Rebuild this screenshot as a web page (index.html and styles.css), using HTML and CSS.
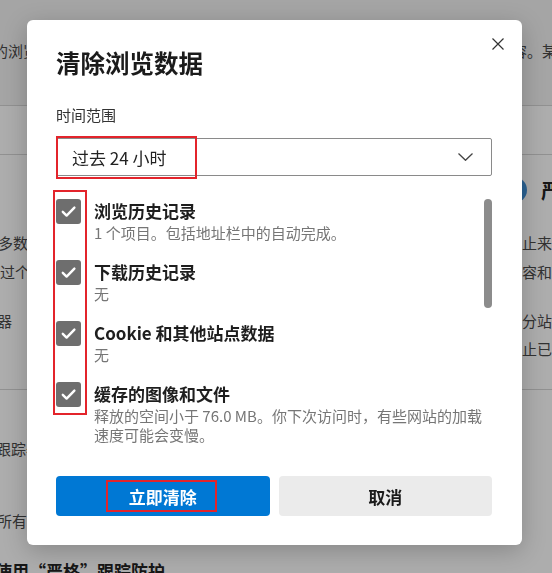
FILE: index.html
```html
<!DOCTYPE html>
<html lang="zh-CN">
<head>
    <meta charset="UTF-8">
    <meta name="viewport" content="width=device-width, initial-scale=1.0">
    <title>清除浏览数据</title>
    <link rel="stylesheet" href="styles.css">
</head>
<body>

    <!-- Settings page behind the dialog -->
    <div class="page">
        <div class="bg-row bg-top">
            <span class="bg-left indent-7">的浏览数据</span>
            <span></span>
            <span class="bg-right indent-10">内容。某些</span>
        </div>
        <div class="bg-band"></div>
        <div class="bg-row bg-head">
            <span></span>
            <span></span>
            <span class="bg-right head-right"><i class="dot"></i><b>严格</b></span>
        </div>
        <div class="bg-group group-a">
            <div class="bg-row">
                <span class="bg-left indent-2">多数跟踪器</span><span></span><span class="bg-right">阻止来自</span>
            </div>
            <div class="bg-row">
                <span class="bg-left">过个性化</span><span></span><span class="bg-right">内容和</span>
            </div>
        </div>
        <div class="bg-group group-b">
            <div class="bg-row">
                <span class="bg-left indent-3">器</span><span></span><span class="bg-right">部分站</span>
            </div>
            <div class="bg-row">
                <span class="bg-left"></span><span></span><span class="bg-right">阻止已知</span>
            </div>
        </div>
        <div class="bg-divider"></div>
        <div class="bg-row row-track">
            <span class="bg-left indent-4">跟踪器</span><span></span><span></span>
        </div>
        <div class="bg-row row-all">
            <span class="bg-left indent-3">所有站点</span><span></span><span></span>
        </div>
        <div class="row-strict">使用“严格”跟踪防护</div>
    </div>

    <div class="overlay"></div>

    <!-- Clear browsing data dialog -->
    <div class="dialog">
        <button class="close" aria-label="关闭">
            <svg width="12" height="12" viewBox="0 0 12 12">
                <path d="M0.5 0.5 L11.5 11.5 M11.5 0.5 L0.5 11.5" stroke="#333" stroke-width="1.2" fill="none"/>
            </svg>
        </button>

        <h1 class="title">清除浏览数据</h1>

        <div class="field-label">时间范围</div>
        <div class="select">
            <span>过去 24 小时</span>
            <svg width="15" height="8" viewBox="0 0 15 8">
                <polyline points="0.5,0.5 7.5,7.3 14.5,0.5" stroke="#444" stroke-width="1.3" fill="none"/>
            </svg>
        </div>

        <div class="list">
            <div class="items">
                <div class="item">
                    <span class="check"><svg width="25" height="25" viewBox="0 0 25 25"><path d="M6.8 12.8 L10.6 16.6 L18.4 8.6" stroke="#fff" stroke-width="2.4" fill="none" stroke-linecap="round" stroke-linejoin="round"/></svg></span>
                    <div class="item-text">
                        <div class="item-title">浏览历史记录</div>
                        <div class="item-desc">1 个项目。包括地址栏中的自动完成。</div>
                    </div>
                </div>
                <div class="item">
                    <span class="check"><svg width="25" height="25" viewBox="0 0 25 25"><path d="M6.8 12.8 L10.6 16.6 L18.4 8.6" stroke="#fff" stroke-width="2.4" fill="none" stroke-linecap="round" stroke-linejoin="round"/></svg></span>
                    <div class="item-text">
                        <div class="item-title">下载历史记录</div>
                        <div class="item-desc">无</div>
                    </div>
                </div>
                <div class="item">
                    <span class="check"><svg width="25" height="25" viewBox="0 0 25 25"><path d="M6.8 12.8 L10.6 16.6 L18.4 8.6" stroke="#fff" stroke-width="2.4" fill="none" stroke-linecap="round" stroke-linejoin="round"/></svg></span>
                    <div class="item-text">
                        <div class="item-title">Cookie 和其他站点数据</div>
                        <div class="item-desc">无</div>
                    </div>
                </div>
                <div class="item">
                    <span class="check"><svg width="25" height="25" viewBox="0 0 25 25"><path d="M6.8 12.8 L10.6 16.6 L18.4 8.6" stroke="#fff" stroke-width="2.4" fill="none" stroke-linecap="round" stroke-linejoin="round"/></svg></span>
                    <div class="item-text">
                        <div class="item-title">缓存的图像和文件</div>
                        <div class="item-desc">释放的空间小于 76.0 MB。你下次访问时，有些网站的加载速度可能会变慢。</div>
                    </div>
                </div>
            </div>
            <div class="scrollbar"></div>
        </div>

        <div class="footer">
            <button class="btn btn-primary">立即清除</button>
            <button class="btn btn-secondary">取消</button>
        </div>

        <!-- red annotation boxes -->
        <div class="mark mark-range"></div>
        <div class="mark mark-checks"></div>
        <div class="mark mark-clear"></div>
    </div>

</body>
</html>
```

FILE: styles.css
```css
body, html {
    margin: 0;
    height: 100%;
    overflow: hidden;
    font-family: "Noto Sans CJK SC", "Noto Sans", sans-serif;
    background-color: #fff;
    color: #4a4a4a;
}

/* background settings page */
.page {
    height: 573px;
    font-size: 15px;
}

.bg-row {
    display: grid;
    grid-template-columns: 45px 1fr 45px;
    align-items: center;
    line-height: 29px;
}

.bg-left,
.bg-right {
    overflow: hidden;
    white-space: nowrap;
}

.indent-2 { text-indent: -2px; }
.indent-3 { text-indent: -3px; }
.indent-4 { text-indent: -4px; }
.indent-7 { text-indent: -7px; }
.indent-10 { text-indent: -10px; }

.bg-top {
    height: 105px;
    padding-bottom: 4px;
    box-sizing: border-box;
    background-color: #f3f3f3;
}

.bg-band {
    height: 50px;
    box-sizing: border-box;
    border-top: 1px solid #d6d6d6;
    border-bottom: 1px solid #d6d6d6;
}

.bg-head {
    height: 70px;
}

.head-right {
    display: flex;
    align-items: center;
    gap: 14px;
    font-size: 20px;
    color: #222;
}

.dot {
    flex: none;
    width: 26px;
    height: 26px;
    margin-left: -6px;
    border-radius: 50%;
    background-color: #3f8fd8;
}

.group-a {
    margin-top: 3px;
}

.group-b {
    margin-top: 21px;
}

.group-b .bg-row {
    line-height: 28px;
}

.bg-divider {
    margin-top: 26px;
    border-top: 1px solid #d6d6d6;
}

.row-track {
    margin-top: 45px;
    line-height: 28px;
}

.row-all {
    margin-top: 44px;
    line-height: 28px;
}

.row-strict {
    margin-top: 24px;
    margin-left: -5px;
    line-height: 24px;
    white-space: nowrap;
    font-size: 17px;
    font-weight: 700;
    color: #222;
}

.overlay {
    position: fixed;
    top: 0;
    left: 0;
    right: 0;
    bottom: 0;
    background-color: rgba(0, 0, 0, 0.32);
}

/* dialog */
.dialog {
    position: absolute;
    left: 27px;
    top: 20px;
    width: 495px;
    box-sizing: border-box;
    padding: 27px 30px 29px 29px;
    background-color: #fff;
    border-radius: 6px;
    box-shadow: 0 6px 24px rgba(0, 0, 0, 0.22);
    color: #1b1b1b;
}

.close {
    position: absolute;
    top: 18px;
    right: 18px;
    width: 12px;
    height: 12px;
    padding: 0;
    border: none;
    background: none;
    display: flex;
}

.title {
    margin: 0;
    font-size: 24.5px;
    line-height: 32px;
    font-weight: 700;
    color: #1b1b1b;
}

.field-label {
    margin-top: 26px;
    font-size: 15px;
    line-height: 20px;
    color: #333;
}

.select {
    margin-top: 13px;
    height: 38px;
    box-sizing: border-box;
    border: 1px solid #8a8a8a;
    border-radius: 2px;
    display: flex;
    align-items: center;
    justify-content: space-between;
    padding: 0 18px 0 15px;
    font-size: 17px;
    color: #222;
}

.list {
    margin-top: 23px;
    height: 248px;
    display: flex;
}

.items {
    flex: 1;
    display: flex;
    flex-direction: column;
    gap: 18px;
}

.item {
    display: flex;
    align-items: flex-start;
    gap: 13px;
}

.check {
    flex: none;
    width: 25px;
    height: 25px;
    border-radius: 3px;
    background-color: #6e6e6e;
    display: flex;
}

.item-title {
    font-size: 17px;
    line-height: 24px;
    font-weight: 700;
    color: #1e1e1e;
}

.item-desc {
    font-size: 15px;
    line-height: 19px;
    color: #767676;
}

.scrollbar {
    flex: none;
    width: 8px;
    height: 109px;
    border-radius: 4px;
    background-color: #8c8c8c;
}

.footer {
    margin-top: 29px;
    display: grid;
    grid-template-columns: 1fr 1fr;
    gap: 9px;
}

.btn {
    height: 40px;
    border: none;
    border-radius: 4px;
    font-family: inherit;
    font-size: 17px;
    font-weight: 700;
}

.btn-primary {
    background-color: #0078d4;
    color: #fff;
}

.btn-secondary {
    background-color: #ebebeb;
    color: #1b1b1b;
}

.mark {
    position: absolute;
    box-sizing: border-box;
    border: 2px solid #e3242b;
}

.mark-range {
    left: 29px;
    top: 116px;
    width: 141px;
    height: 43px;
}

.mark-checks {
    left: 26px;
    top: 170px;
    width: 34px;
    height: 225px;
}

.mark-clear {
    left: 79px;
    top: 460px;
    width: 111px;
    height: 32px;
}
```
